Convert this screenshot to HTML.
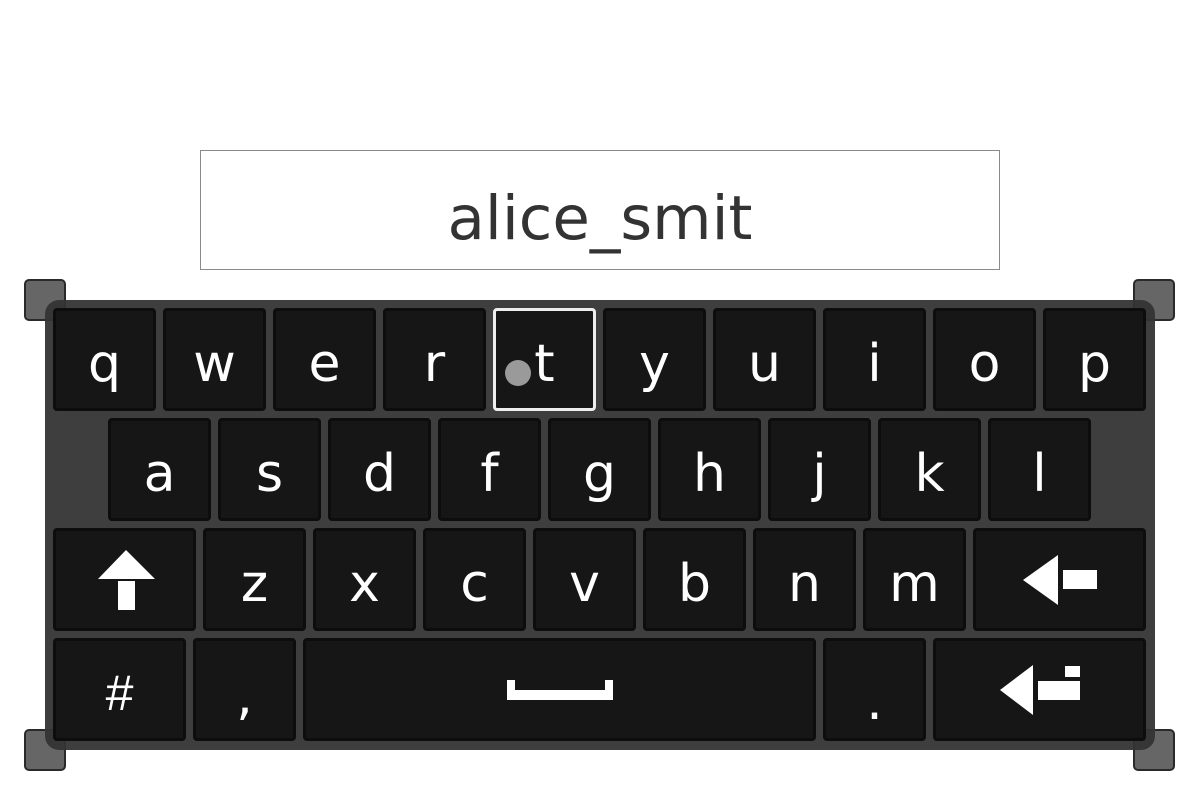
<!DOCTYPE html>
<html><head><style>
body{margin:0;width:1200px;height:800px;background:#fff;position:relative;overflow:hidden;font-family:"DejaVu Sans","Liberation Sans",sans-serif}
.tf{position:absolute;left:200px;top:150px;width:798px;height:118px;border:1px solid #8a8a8a;background:#fff;text-align:center;font-size:61px;line-height:136px;color:#333}
.panel{position:absolute;left:45px;top:300px;width:1110px;height:450px;background:rgba(52,52,52,0.95);border-radius:14px}
.h{position:absolute;width:38px;height:38px;background:#666;border:2px solid #2a2a2a;border-radius:5px}
.k{position:absolute;background:#161616;border:3px solid #0d0d0d;border-radius:4px;box-sizing:border-box;color:#fff;font-size:52px;text-align:center;line-height:106px;height:103px}
.sel{border:3px solid #eee}
svg{position:absolute;left:0;top:0}
</style></head><body>
<div class="tf">alice_smit</div>
<div class="h" style="left:24px;top:279px"></div>
<div class="h" style="left:1133px;top:279px"></div>
<div class="h" style="left:24px;top:729px"></div>
<div class="h" style="left:1133px;top:729px"></div>
<div class="panel"></div>
<div class="k" style="left:53px;top:308px;width:103px">q</div>
<div class="k" style="left:163px;top:308px;width:103px">w</div>
<div class="k" style="left:273px;top:308px;width:103px">e</div>
<div class="k" style="left:383px;top:308px;width:103px">r</div>
<div class="k sel" style="left:493px;top:308px;width:103px">t</div>
<div class="k" style="left:603px;top:308px;width:103px">y</div>
<div class="k" style="left:713px;top:308px;width:103px">u</div>
<div class="k" style="left:823px;top:308px;width:103px">i</div>
<div class="k" style="left:933px;top:308px;width:103px">o</div>
<div class="k" style="left:1043px;top:308px;width:103px">p</div>
<div class="k" style="left:108px;top:418px;width:103px">a</div>
<div class="k" style="left:218px;top:418px;width:103px">s</div>
<div class="k" style="left:328px;top:418px;width:103px">d</div>
<div class="k" style="left:438px;top:418px;width:103px">f</div>
<div class="k" style="left:548px;top:418px;width:103px">g</div>
<div class="k" style="left:658px;top:418px;width:103px">h</div>
<div class="k" style="left:768px;top:418px;width:103px">j</div>
<div class="k" style="left:878px;top:418px;width:103px">k</div>
<div class="k" style="left:988px;top:418px;width:103px">l</div>
<div class="k" style="left:53px;top:528px;width:143px"></div>
<div class="k" style="left:203px;top:528px;width:103px">z</div>
<div class="k" style="left:313px;top:528px;width:103px">x</div>
<div class="k" style="left:423px;top:528px;width:103px">c</div>
<div class="k" style="left:533px;top:528px;width:103px">v</div>
<div class="k" style="left:643px;top:528px;width:103px">b</div>
<div class="k" style="left:753px;top:528px;width:103px">n</div>
<div class="k" style="left:863px;top:528px;width:103px">m</div>
<div class="k" style="left:973px;top:528px;width:173px"></div>
<div class="k" style="left:53px;top:638px;width:133px;font-size:50px;font-family:'Liberation Sans',sans-serif;line-height:104px">#</div>
<div class="k" style="left:193px;top:638px;width:103px;line-height:112px">,</div>
<div class="k" style="left:303px;top:638px;width:513px"></div>
<div class="k" style="left:823px;top:638px;width:103px;line-height:122px">.</div>
<div class="k" style="left:933px;top:638px;width:213px"></div>
<svg width="1200" height="800">
<circle cx="518" cy="373" r="13" fill="#9a9a9a"/>
<polygon points="126,550 155,579 98,579" fill="#fff"/>
<rect x="118" y="581" width="17" height="29" fill="#fff"/>
<polygon points="1023,580 1058,555 1058,605" fill="#fff"/>
<rect x="1063" y="570" width="34" height="19" fill="#fff"/>
<polygon points="1000,690 1033,665 1033,715" fill="#fff"/>
<rect x="1038" y="681" width="42" height="19" fill="#fff"/>
<rect x="1065" y="666" width="15" height="11" fill="#fff"/>
<path d="M507 680h8v10h90v-10h8v20h-106z" fill="#fff"/>
</svg>
</body></html>
